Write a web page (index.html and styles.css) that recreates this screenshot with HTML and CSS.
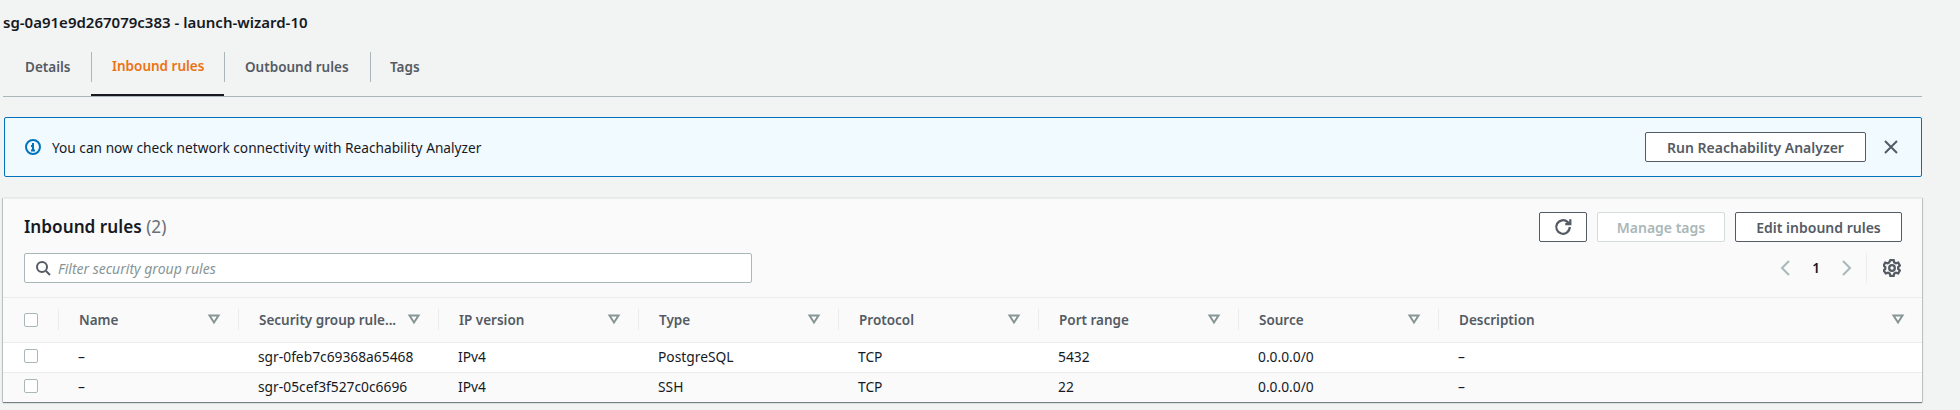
FILE: index.html
```html
<!DOCTYPE html>
<html lang="en">
<head>
  <meta charset="UTF-8">
  <title>Inbound rules</title>
  <link rel="stylesheet" href="styles.css">
</head>
<body>
  <div class="page">
    <h2 class="sg-title">sg-0a91e9d267079c383 - launch-wizard-10</h2>

    <div class="tabs">
      <a class="tab tab-details">Details</a>
      <a class="tab tab-inbound active">Inbound rules</a>
      <a class="tab tab-outbound">Outbound rules</a>
      <a class="tab tab-tags">Tags</a>
    </div>

    <div class="banner">
      <svg class="info-icon" viewBox="0 0 16 16"><circle cx="8" cy="8" r="7"/><path d="M6 7h2v4.500M6 11.500h4"/><path d="M7 4h2v2H7z" class="dot"/></svg>
      <span class="banner-text">You can now check network connectivity with Reachability Analyzer</span>
      <button class="btn btn-run">Run Reachability Analyzer</button>
      <svg class="close-icon" viewBox="0 0 16 16"><path d="M2 2l12 12M14 2L2 14"/></svg>
    </div>

    <div class="card">
      <div class="card-head">
        <div class="head-left">
          <h3 class="card-title">Inbound rules <span class="count">(2)</span></h3>
          <div class="filter">
            <svg class="search-icon" viewBox="0 0 16 16"><circle cx="7" cy="7" r="5"/><path d="M11 11l4 4"/></svg>
            <span class="placeholder">Filter security group rules</span>
          </div>
        </div>
        <div class="head-right">
          <div class="actions">
            <button class="btn btn-refresh"><svg class="refresh-icon" viewBox="0 0 16 16"><path d="M14 8a6 6 0 1 1-1.800-4.300L14 5.500"/><path d="M14.500 1v4.500H10"/></svg></button>
            <button class="btn btn-manage" disabled>Manage tags</button>
            <button class="btn btn-edit">Edit inbound rules</button>
          </div>
          <div class="pager">
            <svg class="chevron" viewBox="0 0 16 16"><path d="M11 1L4 8l7 7"/></svg>
            <span class="page-num">1</span>
            <svg class="chevron" viewBox="0 0 16 16"><path d="M5 1l7 7-7 7"/></svg>
            <span class="pager-sep"></span>
            <svg class="gear-icon" viewBox="0 0 16 16"><circle cx="8" cy="8" r="2.500"/><path d="M6.500 1h3l.5 2 1.500.8 2-.6 1.500 2.600-1.500 1.400v1.600l1.500 1.400-1.500 2.600-2-.6-1.500.8-.5 2h-3l-.5-2-1.500-.8-2 .6L.5 10.200 2 8.800V7.200L.5 5.800 2 3.200l2 .6L5.500 3z"/></svg>
          </div>
        </div>
      </div>

      <table class="rules">
        <colgroup>
          <col class="col-check">
          <col class="col-name">
          <col class="col-std"><col class="col-std"><col class="col-std"><col class="col-std"><col class="col-std"><col class="col-std">
          <col>
        </colgroup>
        <thead>
          <tr>
            <th><span class="checkbox"></span></th>
            <th><div class="th-in">Name <svg class="caret" viewBox="0 0 16 16"><path d="M3.500 4.500h9L8 11.500z"/></svg></div></th>
            <th><div class="th-in">Security group rule... <svg class="caret" viewBox="0 0 16 16"><path d="M3.500 4.500h9L8 11.500z"/></svg></div></th>
            <th><div class="th-in">IP version <svg class="caret" viewBox="0 0 16 16"><path d="M3.500 4.500h9L8 11.500z"/></svg></div></th>
            <th><div class="th-in">Type <svg class="caret" viewBox="0 0 16 16"><path d="M3.500 4.500h9L8 11.500z"/></svg></div></th>
            <th><div class="th-in">Protocol <svg class="caret" viewBox="0 0 16 16"><path d="M3.500 4.500h9L8 11.500z"/></svg></div></th>
            <th><div class="th-in">Port range <svg class="caret" viewBox="0 0 16 16"><path d="M3.500 4.500h9L8 11.500z"/></svg></div></th>
            <th><div class="th-in">Source <svg class="caret" viewBox="0 0 16 16"><path d="M3.500 4.500h9L8 11.500z"/></svg></div></th>
            <th><div class="th-in">Description <svg class="caret" viewBox="0 0 16 16"><path d="M3.500 4.500h9L8 11.500z"/></svg></div></th>
          </tr>
        </thead>
        <tbody>
          <tr>
            <td><span class="checkbox"></span></td>
            <td>–</td><td>sgr-0feb7c69368a65468</td><td>IPv4</td><td>PostgreSQL</td><td>TCP</td><td>5432</td><td>0.0.0.0/0</td><td>–</td>
          </tr>
          <tr>
            <td><span class="checkbox"></span></td>
            <td>–</td><td>sgr-05cef3f527c0c6696</td><td>IPv4</td><td>SSH</td><td>TCP</td><td>22</td><td>0.0.0.0/0</td><td>–</td>
          </tr>
        </tbody>
      </table>
    </div>
  </div>
</body>
</html>
```

FILE: styles.css
```css
* { box-sizing: border-box; }
html, body { margin: 0; }
body {
  background: #f2f3f3;
  color: #16191f;
  font-family: "Noto Sans", Roboto, sans-serif;
  font-size: 13.5px;
  height: 410px;
  overflow: hidden;
}
svg { display: block; fill: none; stroke-width: 2; }

.page { width: 1922px; padding-left: 3px; }
.sg-title { margin: 0; height: 52px; padding-top: 12px; font-size: 15px; line-height: 20px; font-weight: 600; }

/* tabs */
.tabs { display: flex; height: 45px; border-bottom: 1px solid #aab7b8; }
.tab { display: flex; align-items: center; height: 44px; padding: 0 20px 14px; font-weight: 600; color: #545b64; position: relative; white-space: nowrap; }
.tab + .tab::before { content: ""; position: absolute; left: 0; top: 0; height: 30px; width: 1px; background: #aab7b8; }
.tab.active { color: #ec7211; border-bottom: 2px solid #16191f; }
.tab-details { width: 88px; padding-left: 22px; }
.tab-inbound { width: 133px; padding-left: 21px; }
.tab-outbound { width: 146px; padding-left: 21px; }

/* banner */
.banner { display: flex; align-items: center; height: 60px; margin: 20px 0 21px 1px; padding: 0 22px 0 20px; background: #f1faff; border: 1px solid #0073bb; border-radius: 2px; }
.banner-text { flex: 1; margin-left: 11px; font-size: 13.7px; }
.info-icon { width: 16px; height: 16px; stroke: #0073bb; }
.info-icon .dot { fill: #0073bb; stroke: none; }
.close-icon { width: 16px; height: 16px; margin-left: 17px; stroke: #545b64; }

.btn { height: 30px; padding: 0 20px; background: #fff; border: 1px solid #545b64; border-radius: 2px; color: #545b64; font: 600 14px "Noto Sans", Roboto, sans-serif; }
.btn-run { width: 221px; }
.btn[disabled] { color: #aab7b8; border-color: #d5dbdb; }

/* card */
.card { background: #fafafa; border-top: 1px solid #eaeded; box-shadow: 0 1px 1px 0 rgba(0,28,36,.5), 1px 0 1px 0 rgba(0,28,36,.15), -1px 0 1px 0 rgba(0,28,36,.15); }
.card-head { display: flex; justify-content: space-between; height: 99px; padding: 13px 20px 0 21px; border-bottom: 1px solid #eaeded; }
.card-title { margin: 0; font-size: 17.2px; line-height: 30px; font-weight: 600; }
.count { font-weight: 400; color: #687078; }

.filter { display: flex; align-items: center; width: 728px; height: 30px; margin-top: 11px; padding-left: 10px; background: #fff; border: 1px solid #aab7b8; border-radius: 2px; }
.search-icon { width: 16px; height: 16px; stroke: #545b64; }
.placeholder { margin-left: 7px; font-size: 14px; font-style: italic; color: #879596; }

.head-right { display: flex; flex-direction: column; align-items: flex-end; }
.actions { display: flex; gap: 10px; }
.btn-refresh { width: 48px; padding: 0; display: flex; align-items: center; justify-content: center; }
.refresh-icon { width: 18px; height: 18px; stroke: #545b64; }
.btn-manage { width: 128px; padding: 0; }
.btn-edit { width: 167px; padding: 0; }

.pager { display: flex; align-items: center; height: 30px; margin-top: 11px; }
.chevron { width: 16px; height: 16px; stroke: #aab7b8; }
.page-num { width: 44px; text-align: center; font-weight: 600; }
.pager-sep { width: 1px; height: 30px; margin: 0 16px 0 12px; background: #eaeded; }
.gear-icon { width: 18px; height: 18px; margin-right: 1px; stroke: #545b64; }

/* table */
.rules { width: 100%; border-collapse: collapse; table-layout: fixed; }
.col-check { width: 55px; }
.col-name { width: 180px; }
.col-std { width: 200px; }
.rules th { height: 44px; padding: 0; text-align: left; font-weight: 600; color: #545b64; border-bottom: 1px solid #eaeded; }
.rules td { height: 30px; padding: 0 0 2px 20px; background: #fff; border-bottom: 1px solid #eaeded; font-size: 13.8px; }
.rules tr:last-child td { background: #fafafa; border-bottom: 0; }
.rules th:first-child, .rules td:first-child { padding-left: 21px; }
.th-in { display: flex; align-items: center; justify-content: space-between; height: 21px; padding: 0 16px 0 20px; border-left: 1px solid #eaeded; }
.caret { width: 16px; height: 16px; margin-top: -2px; stroke: #879596; }
.checkbox { display: block; width: 14px; height: 14px; background: #fff; border: 1px solid #aab7b8; border-radius: 2px; }
```
